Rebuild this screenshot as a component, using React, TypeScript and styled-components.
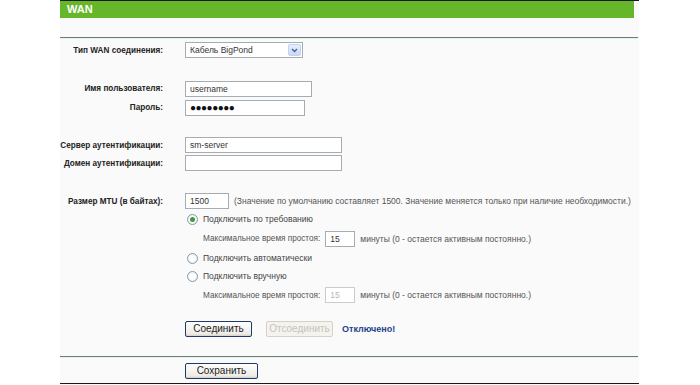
import styled, { createGlobalStyle } from 'styled-components'

const GlobalStyle = createGlobalStyle`
    html, body {
        margin: 0;
        padding: 0;
        background: #ffffff;
    }
    body {
        font-family: "Liberation Sans", Arial, sans-serif;
        font-size: 8.5px;
        color: #222;
    }
`

const Page = styled.div`
    width: 700px;
    height: 385px;
    overflow: hidden;
`

const Panel = styled.div`
    margin-left: 60px;
    width: 579px;
    height: 384px;
    background: #fafafa;
    border-top: 1px solid #1a1a1a;
    border-bottom: 1px solid #1a1a1a;
    box-sizing: border-box;
    display: flex;
    flex-direction: column;
`

const Header = styled.div`
    height: 17px;
    margin-right: 5px;
    background: #66b62a;
    color: #ffffff;
    font-weight: bold;
    font-size: 11px;
    line-height: 17px;
    padding-left: 7px;
`

const Divider = styled.div<{ $top: number; $bottom: number }>`
    margin-top: ${(p) => p.$top}px;
    margin-bottom: ${(p) => p.$bottom}px;
    margin-right: 1px;
    height: 1px;
    background: #6f7d77;
    box-shadow: 0 1px 0 #e3f3ec;
`

const Row = styled.div<{ $h?: number; $gap?: number }>`
    display: grid;
    grid-template-columns: 103px 1fr;
    column-gap: 22px;
    align-items: center;
    height: ${(p) => p.$h ?? 18}px;
    margin-top: ${(p) => p.$gap ?? 0}px;
`

const Label = styled.div`
    text-align: right;
    font-weight: bold;
    font-size: 8.2px;
    color: #222;
    white-space: nowrap;
`

const Field = styled.div<{ $indent?: number }>`
    display: flex;
    align-items: center;
    gap: 5px;
    padding-left: ${(p) => p.$indent ?? 0}px;
    white-space: nowrap;
`

const Input = styled.div<{ $w: number; $disabled?: boolean }>`
    width: ${(p) => p.$w}px;
    height: 16px;
    box-sizing: border-box;
    border: 1px solid ${(p) => (p.$disabled ? '#c9cdd0' : '#a5acb2')};
    background: #ffffff;
    color: ${(p) => (p.$disabled ? '#b8b8b8' : '#333')};
    padding-left: 4px;
    line-height: 14px;
    font-size: 8.5px;
`

const Dots = styled.span`
    font-size: 10px;
    letter-spacing: -0.5px;
    color: #111;
`

const Select = styled.div`
    width: 118px;
    height: 16px;
    box-sizing: border-box;
    border: 1px solid #a5acb2;
    background: #ffffff;
    display: flex;
    align-items: center;
    justify-content: space-between;
    padding: 0 1px 0 4px;
    color: #333;
`

const Arrow = styled.div`
    width: 13px;
    height: 12px;
    box-sizing: border-box;
    border: 1px solid #c2d4f2;
    border-radius: 2px;
    background: linear-gradient(#e6eefc, #c8d9f6);
    display: flex;
    align-items: center;
    justify-content: center;
`

const Note = styled.span`
    color: #555;
`

const IdleLabel = styled(Note)`
    font-size: 8.2px;
`

const RadioRow = styled.label`
    display: flex;
    align-items: center;
    gap: 5px;
    color: #444;
    padding-left: 2px;
`

const Radio = styled.span<{ $checked?: boolean }>`
    width: 11px;
    height: 11px;
    box-sizing: border-box;
    border-radius: 50%;
    border: 1px solid #7f9db9;
    background: radial-gradient(circle, #ffffff 40%, #e2e2dc 100%);
    display: flex;
    align-items: center;
    justify-content: center;
    &::after {
        content: '';
        width: 5px;
        height: 5px;
        border-radius: 50%;
        background: ${(p) => (p.$checked ? '#3e9c3a' : 'transparent')};
    }
`

const Button = styled.div<{ $w: number; $disabled?: boolean }>`
    width: ${(p) => p.$w}px;
    height: 16px;
    box-sizing: border-box;
    border: 1px solid ${(p) => (p.$disabled ? '#d4d2c8' : '#1f3a6a')};
    border-radius: 2px;
    background: ${(p) =>
        p.$disabled ? '#f4f3ee' : 'linear-gradient(#ffffff, #ecebe6 85%, #d6d0c5)'};
    color: ${(p) => (p.$disabled ? '#c6c4bc' : '#222')};
    text-align: center;
    line-height: 14px;
    font-size: 10px;
`

const Status = styled.span`
    font-weight: bold;
    font-size: 9px;
    color: #22428a;
    margin-left: -5px;
`

const Buttons = styled.div`
    display: flex;
    align-items: center;
    gap: 14px;
`

export default function App() {
    return (
        <Page>
            <GlobalStyle />
            <Panel>
                <Header>WAN</Header>
                <Divider $top={19} $bottom={3} />

                <Row>
                    <Label>Тип WAN соединения:</Label>
                    <Field>
                        <Select>
                            <span>Кабель BigPond</span>
                            <Arrow>
                                <svg width="7" height="5" viewBox="0 0 7 5">
                                    <path
                                        d="M1 1 L3.5 3.5 L6 1"
                                        fill="none"
                                        stroke="#4d6185"
                                        strokeWidth="1.4"
                                    />
                                </svg>
                            </Arrow>
                        </Select>
                    </Field>
                </Row>

                <Row $h={19} $gap={20}>
                    <Label>Имя пользователя:</Label>
                    <Field>
                        <Input $w={127}>username</Input>
                    </Field>
                </Row>
                <Row $h={19}>
                    <Label>Пароль:</Label>
                    <Field>
                        <Input $w={120}>
                            <Dots>●●●●●●●●</Dots>
                        </Input>
                    </Field>
                </Row>

                <Row $gap={19}>
                    <Label>Сервер аутентификации:</Label>
                    <Field>
                        <Input $w={157}>sm-server</Input>
                    </Field>
                </Row>
                <Row>
                    <Label>Домен аутентификации:</Label>
                    <Field>
                        <Input $w={157} />
                    </Field>
                </Row>

                <Row $gap={20}>
                    <Label>Размер MTU (в байтах):</Label>
                    <Field>
                        <Input $w={44}>1500</Input>
                        <Note>
                            (Значение по умолчанию составляет 1500. Значение меняется
                            только при наличие необходимости.)
                        </Note>
                    </Field>
                </Row>
                <Row>
                    <span />
                    <RadioRow>
                        <Radio $checked />
                        Подключить по требованию
                    </RadioRow>
                </Row>
                <Row $h={21}>
                    <span />
                    <Field $indent={18}>
                        <IdleLabel>Максимальное время простоя:</IdleLabel>
                        <Input $w={30}>15</Input>
                        <Note>минуты (0 - остается активным постоянно.)</Note>
                    </Field>
                </Row>
                <Row>
                    <span />
                    <RadioRow>
                        <Radio />
                        Подключить автоматически
                    </RadioRow>
                </Row>
                <Row>
                    <span />
                    <RadioRow>
                        <Radio />
                        Подключить вручную
                    </RadioRow>
                </Row>
                <Row $h={20}>
                    <span />
                    <Field $indent={18}>
                        <IdleLabel>Максимальное время простоя:</IdleLabel>
                        <Input $w={30} $disabled>
                            15
                        </Input>
                        <Note>минуты (0 - остается активным постоянно.)</Note>
                    </Field>
                </Row>

                <Row $gap={15}>
                    <span />
                    <Buttons>
                        <Button $w={67}>Соединить</Button>
                        <Button $w={67} $disabled>
                            Отсоединить
                        </Button>
                        <Status>Отключено!</Status>
                    </Buttons>
                </Row>

                <Divider $top={18} $bottom={6} />

                <Row $h={15}>
                    <span />
                    <Field>
                        <Button $w={73}>Сохранить</Button>
                    </Field>
                </Row>
            </Panel>
        </Page>
    )
}
